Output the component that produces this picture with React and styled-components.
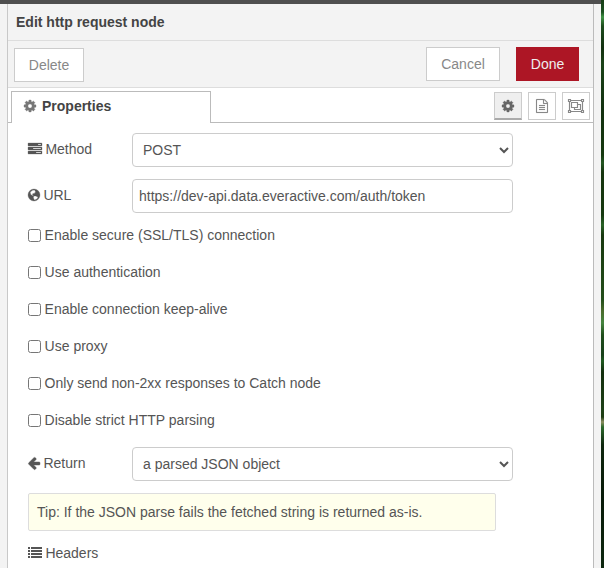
import React from 'react';
import styled, { createGlobalStyle } from 'styled-components';

const GlobalStyle = createGlobalStyle`
  * { box-sizing: border-box; }
  body {
    margin: 0;
    overflow: hidden;
    background: #f3f3f3;
    color: #555;
    font: 14px/20px "Liberation Sans", Arial, sans-serif;
  }
`;

const Window = styled.div`
  display: grid;
  grid-template: 4px 564px / 8px 586px 7px 3px;
  width: 604px;
  height: 568px;
  overflow: hidden;
`;

const TopEdge = styled.div`
  grid-column: 1 / 4;
  background: #4f4f4f;
`;

const Backdrop = styled.div`
  grid-column: 4;
  grid-row: 1 / 3;
  background: linear-gradient(
    #173d16 0, #1b5120 12px, #3f9344 17px, #1d4c1d 26px, #12300f 48px,
    #1a4318 64px, #12300f 110px, #15380f 155px, #235722 163px, #15340f 172px,
    #15380f 215px, #286326 225px, #17380f 235px, #234e1a 300px,
    #4a6b2c 311px, #45853f 323px, #1f4d1b 335px, #17401a 355px, #1f5a20 361px,
    #122e0e 372px, #1d4016 410px, #1d3c12 417px, #8c8f61 422px, #2c6a2c 427px,
    #0e260e 445px, #071a08 500px, #0d280f 568px
  );
`;

const Tray = styled.main`
  grid-column: 2;
  grid-row: 2;
  width: 587px;
  margin-left: -1px;
  border: solid #bbb;
  border-width: 0 1px;
  border-left-color: #c8c8c8;
  background: #fff;
`;

const Header = styled.header`
  height: 37px;
  padding: 8px;
  border-bottom: 1px solid #ddd;
  background: #f3f3f3;
  font-weight: bold;
  color: #444;
`;

const Toolbar = styled.div`
  display: flex;
  align-items: flex-start;
  height: 47px;
  padding: 6px 14px 0 6px;
  border-bottom: 1px solid #ddd;
  background: #f3f3f3;
`;

const Button = styled.button`
  height: 34px;
  padding: 0;
  width: ${(p) => p.$width}px;
  margin: ${(p) => p.$margin || '0'};
  border: 1px solid ${(p) => (p.$primary ? '#ad1625' : '#ccc')};
  border-radius: 0;
  background: ${(p) => (p.$primary ? '#ad1625' : '#fff')};
  color: ${(p) => (p.$primary ? '#eee' : '#888')};
  font: inherit;
`;

const TabBar = styled.nav`
  display: flex;
  height: 35px;
  padding: 3px 3px 0;
  background: linear-gradient(#bbb, #bbb) bottom / 100% 1px no-repeat;
`;

const Tab = styled.div`
  display: flex;
  align-items: center;
  gap: 6px;
  width: 200px;
  height: 32px;
  padding: 0 12px 3px;
  border: 1px solid #bbb;
  border-bottom: 0;
  background: #fff;
  font-weight: bold;
  color: #444;
`;

const TabTools = styled.div`
  display: flex;
  gap: 6px;
  margin: 1px 0 0 auto;
`;

const TabTool = styled.button`
  display: flex;
  align-items: center;
  justify-content: center;
  width: 28px;
  height: 28px;
  padding: 0;
  border: 1px solid #ccc;
  border-bottom: ${(p) => (p.$active ? '2px solid #aaa' : '1px solid #ccc')};
  background: ${(p) => (p.$active ? '#efefef' : '#fff')};
  color: ${(p) => (p.$active ? '#666' : '#888')};
`;

const Form = styled.form`
  padding: 10px 20px;
`;

const Row = styled.div`
  display: flex;
  align-items: center;
  height: 34px;
  margin-bottom: 12px;
`;

const Label = styled.label`
  display: flex;
  align-items: center;
  gap: 3.4px;
  width: 104px;
  padding-bottom: 2px;
`;

const Field = styled.input`
  width: 381px;
  height: 34px;
  padding: 0 6px;
  border: 1px solid #ccc;
  border-radius: 4px;
  background: #fff;
  color: #555;
  font: inherit;
`;

const CheckRow = styled.label`
  display: flex;
  align-items: center;
  height: 20px;
  margin-bottom: 17px;
`;

const Checkbox = styled.input`
  width: 13px;
  height: 13px;
  margin: 0 3.6px 0 0;
`;

const Tip = styled.div`
  width: 468px;
  height: 38px;
  padding: 8px;
  border: 1px solid #ddd;
  border-radius: 2px;
  background: #ffffec;
`;

const ListLabel = styled(Label)`
  padding: 0;
  margin-top: 12px;
`;

const Glyph = styled.svg`
  flex: none;
  display: block;
  overflow: visible;
  fill: currentColor;
`;

const GearGlyph = styled(Glyph)`
  color: ${(p) => p.$tone || 'inherit'};
  stroke: currentColor;
  stroke-width: 40;
`;

const Gear = ({ tone }) => (
  <GearGlyph $tone={tone} width="12" height="12" viewBox="128 128 1536 1536">
    <path d="M1152 896q0-106-75-181t-181-75-181 75-75 181 75 181 181 75 181-75 75-181zm512-109v222q0 12-8 23t-20 13l-185 28q-19 54-39 91 35 50 107 138 10 12 10 25t-9 23q-27 37-99 108t-94 71q-12 0-26-9l-138-108q-44 23-91 38-16 136-29 186-7 28-36 28h-222q-14 0-24.5-8.5t-11.5-21.5l-28-184q-49-16-90-37l-141 107q-10 9-25 9-14 0-25-11-126-114-165-168-7-10-7-23 0-12 8-23 15-21 51-66.5t54-70.5q-27-50-41-99l-183-27q-13-2-21-12.5t-8-23.5v-222q0-12 8-23t19-13l186-28q14-46 39-92-40-57-107-138-10-12-10-24 0-10 9-23 26-36 98.5-107.5t94.5-71.5q13 0 26 10l138 107q44-23 91-38 16-136 29-186 7-28 36-28h222q14 0 24.5 8.5t11.5 21.5l28 184q49 16 90 37l142-107q9-9 24-9 13 0 25 10 129 119 165 170 7 8 7 22 0 12-8 23-15 21-51 66.5t-54 70.5q26 50 41 98l183 28q13 2 21 12.5t8 23.5z" />
  </GearGlyph>
);

const Tasks = () => (
  <Glyph width="14" height="14" viewBox="0 0 1792 1792" stroke="currentColor" strokeWidth="36">
    <path d="M1024 1408h640v-128h-640v128zm-384-512h1024v-128h-1024v128zm640-512h384v-128h-384v128zm512 832v256q0 26-19 45t-45 19h-1664q-26 0-45-19t-19-45v-256q0-26 19-45t45-19h1664q26 0 45 19t19 45zm0-512v256q0 26-19 45t-45 19h-1664q-26 0-45-19t-19-45v-256q0-26 19-45t45-19h1664q26 0 45 19t19 45zm0-512v256q0 26-19 45t-45 19h-1664q-26 0-45-19t-19-45v-256q0-26 19-45t45-19h1664q26 0 45 19t19 45z" />
  </Glyph>
);

const Globe = () => (
  <Glyph width="12" height="12" viewBox="0 0 12 12" fillRule="evenodd" stroke="currentColor" strokeWidth=".3">
    <path d="M6 0a6 6 0 1 1 0 12A6 6 0 0 1 6 0ZM6.6 1 4.6 1.3 3 2.3 2.2 3.5 2.6 5.2 3.8 6.3 5.3 6.9 5.1 6 4.3 5.2 5 4.5 6.2 4.7 6.7 3.7 7.8 3 7.2 2.2ZM6 7 5.3 8 5.6 9.3 6.3 10.9 8 10.6 9.3 9.6 10 8.3 9 7.6 7.6 7Z" />
  </Glyph>
);

const ArrowLeft = () => (
  <Glyph width="12" height="12" viewBox="128 128 1536 1536" stroke="currentColor" strokeWidth="60">
    <path d="M1664 896v128q0 53-32.5 90.5t-84.5 37.5h-704l293 294q38 36 38 90t-38 90l-75 76q-37 37-90 37-52 0-91-37l-651-652q-37-37-37-90 0-52 37-91l651-650q38-38 91-38 52 0 90 38l75 74q38 38 38 91t-38 91l-293 293h704q52 0 84.5 37.5t32.5 90.5z" />
  </Glyph>
);

const List = () => (
  <Glyph width="14" height="12" viewBox="0 0 14 12">
    {[0, 3, 6, 9].map((y) => (
      <path key={y} d={`M0 ${y}h2v2H0ZM3 ${y}h11v2H3Z`} />
    ))}
  </Glyph>
);

const FileText = () => (
  <Glyph width="12" height="14" viewBox="128 0 1536 1792" stroke="currentColor" strokeWidth="16">
    <path d="M1596 380q28 28 48 76t20 88v1152q0 40-28 68t-68 28h-1344q-40 0-68-28t-28-68v-1600q0-40 28-68t68-28h896q40 0 88 20t76 48zm-444-244v376h376q-10-29-22-41l-313-313q-12-12-41-22zm384 1528v-1024h-416q-40 0-68-28t-28-68v-416h-768v1536h1280zm-1024-864q0-14 9-23t23-9h704q14 0 23 9t9 23v64q0 14-9 23t-23 9h-704q-14 0-23-9t-9-23v-64zm736 224q14 0 23 9t9 23v64q0 14-9 23t-23 9h-704q-14 0-23-9t-9-23v-64q0-14 9-23t23-9h704zm0 256q14 0 23 9t9 23v64q0 14-9 23t-23 9h-704q-14 0-23-9t-9-23v-64q0-14 9-23t23-9h704z" />
  </Glyph>
);

const ObjectGroup = () => (
  <Glyph width="16" height="14" viewBox="0 0 16 14">
    <g fill="none" stroke="currentColor" strokeWidth="1.15">
      <path d="M3 1.5h10M3 12.5h10M1.5 3v8M14.5 3v8" />
      <path d="M.5.5h2v2h-2ZM13.5.5h2v2h-2ZM.5 11.5h2v2h-2ZM13.5 11.5h2v2h-2Z" />
      <path d="M3.5 3.5h6v5h-6ZM9.5 5.5h3v5h-6v-2" />
    </g>
  </Glyph>
);

const options = [
  'Enable secure (SSL/TLS) connection',
  'Use authentication',
  'Enable connection keep-alive',
  'Use proxy',
  'Only send non-2xx responses to Catch node',
  'Disable strict HTTP parsing',
];

export default function App() {
  return (
    <>
      <GlobalStyle />
      <Window>
        <TopEdge />
        <Backdrop />
        <Tray>
          <Header>Edit http request node</Header>
          <Toolbar>
            <Button $width={70} $margin="1px auto 0 0">Delete</Button>
            <Button $width={74} $margin="0 16px 0 0">Cancel</Button>
            <Button $width={63} $primary>Done</Button>
          </Toolbar>
          <TabBar>
            <Tab><Gear tone="#777" />Properties</Tab>
            <TabTools>
              <TabTool $active aria-label="Properties"><Gear /></TabTool>
              <TabTool aria-label="Description"><FileText /></TabTool>
              <TabTool aria-label="Appearance"><ObjectGroup /></TabTool>
            </TabTools>
          </TabBar>
          <Form>
            <Row>
              <Label><Tasks />Method</Label>
              <Field as="select"><option>POST</option></Field>
            </Row>
            <Row>
              <Label><Globe />URL</Label>
              <Field type="text" defaultValue="https://dev-api.data.everactive.com/auth/token" />
            </Row>
            {options.map((text) => (
              <CheckRow key={text}><Checkbox type="checkbox" />{text}</CheckRow>
            ))}
            <Row>
              <Label><ArrowLeft />Return</Label>
              <Field as="select"><option>a parsed JSON object</option></Field>
            </Row>
            <Tip>Tip: If the JSON parse fails the fetched string is returned as-is.</Tip>
            <ListLabel><List />Headers</ListLabel>
          </Form>
        </Tray>
      </Window>
    </>
  );
}
